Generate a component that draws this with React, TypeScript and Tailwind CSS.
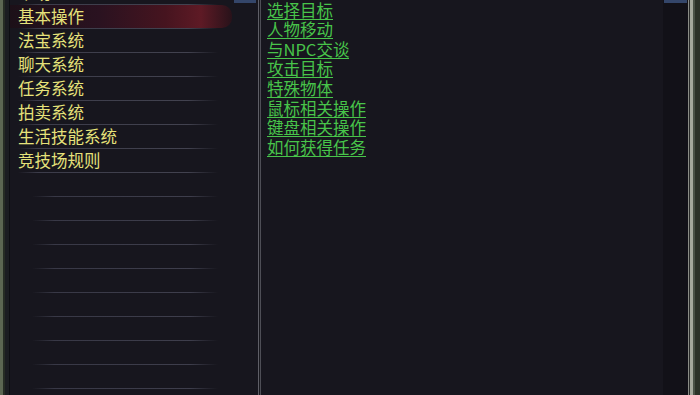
import React from "react";

const leftItems = ["基本操作", "法宝系统", "聊天系统", "任务系统", "拍卖系统", "生活技能系统", "竞技场规则"];
const rightItems = ["选择目标", "人物移动", "与NPC交谈", "攻击目标", "特殊物体", "鼠标相关操作", "键盘相关操作", "如何获得任务"];

const font = { fontFamily: '"Noto Sans CJK SC", "Noto Sans", sans-serif' };

function Sep({ wide }: { wide: boolean }) {
  return (
    <div className={wide ? "h-px shrink-0 ml-[8px] w-[200px] bg-[linear-gradient(90deg,transparent,#3c3c4a_10%,#42424f_85%,transparent)]" : "h-px shrink-0 ml-[22px] w-[186px] bg-[linear-gradient(90deg,transparent,#383846_12%,#3e3e4c_85%,transparent)]"} />
  );
}

export default function App() {
  const empties = Array.from({ length: 10 });
  return (
    <div className="w-[700px] h-[395px] overflow-hidden flex bg-[#17161e]" style={font}>
      {/* left frame */}
      <div className="w-[3px] shrink-0 h-full bg-[#5c6652]" />
      <div className="w-[2px] shrink-0 h-full bg-[#262c24]" />
      <div className="w-[4px] shrink-0 h-full bg-[#1b1c21]" />
      <div className="w-px shrink-0 h-full bg-[#0d0d12]" />
      {/* left panel */}
      <div className="w-[222px] shrink-0 h-full flex flex-col mt-[-19px]">
        <div className="h-[24px] shrink-0 flex flex-col">
          <div className="flex-1 flex items-center pl-[8px] text-[16.5px] text-[#e4df78] leading-none">帮助</div>
          <Sep wide />
        </div>
        {leftItems.map((t, i) => (
          <div key={t} className="h-[24px] shrink-0 flex flex-col">
            <div
              className={
                "flex-1 flex items-center pl-[8px] text-[16.5px] text-[#e6e27a] leading-none " +
                (i === 0
                  ? "rounded-r-[10px] bg-[linear-gradient(90deg,#1c1018_0%,#2a1220_40%,#46141f_70%,#5e1a25_86%,#28121a_100%)]"
                  : "")
              }
            >
              {t}
            </div>
            <Sep wide />
          </div>
        ))}
        {empties.map((_, i) => (
          <div key={i} className="h-[24px] shrink-0 flex flex-col">
            <div className="flex-1" />
            <Sep wide={false} />
          </div>
        ))}
      </div>
      {/* left scrollbar */}
      <div className="w-[26px] shrink-0 h-full flex flex-col">
        <div className="h-[3px] mx-[2px] bg-[#34466a]" />
      </div>
      {/* divider */}
      <div className="w-px shrink-0 h-full bg-[#5e5e66]" />
      <div className="w-px shrink-0 h-full bg-[#1a1a20]" />
      <div className="w-px shrink-0 h-full bg-[#4e4e56]" />
      {/* right panel */}
      <div className="w-[402px] shrink-0 h-full flex flex-col pl-[6px]">
        {rightItems.map((t) => (
          <div key={t} className="h-[19.6px] shrink-0 flex items-end">
            <span className="text-[16.5px] leading-[17px] text-[#48c44a] border-b border-[#48c44a]">{t}</span>
          </div>
        ))}
      </div>
      {/* right scrollbar */}
      <div className="w-[25px] shrink-0 h-full bg-[#121118] flex flex-col">
        <div className="h-[3px] mx-[1px] bg-[#34466a]" />
      </div>
      {/* right frame */}
      <div className="w-px shrink-0 h-full bg-[#8a8c86]" />
      <div className="w-px shrink-0 h-full bg-[#2a2c2a]" />
      <div className="w-[3px] shrink-0 h-full bg-[#a4a89c]" />
      <div className="w-[2px] shrink-0 h-full bg-[#4a5246]" />
      <div className="flex-1 h-full bg-[#2c3228]" />
    </div>
  );
}
